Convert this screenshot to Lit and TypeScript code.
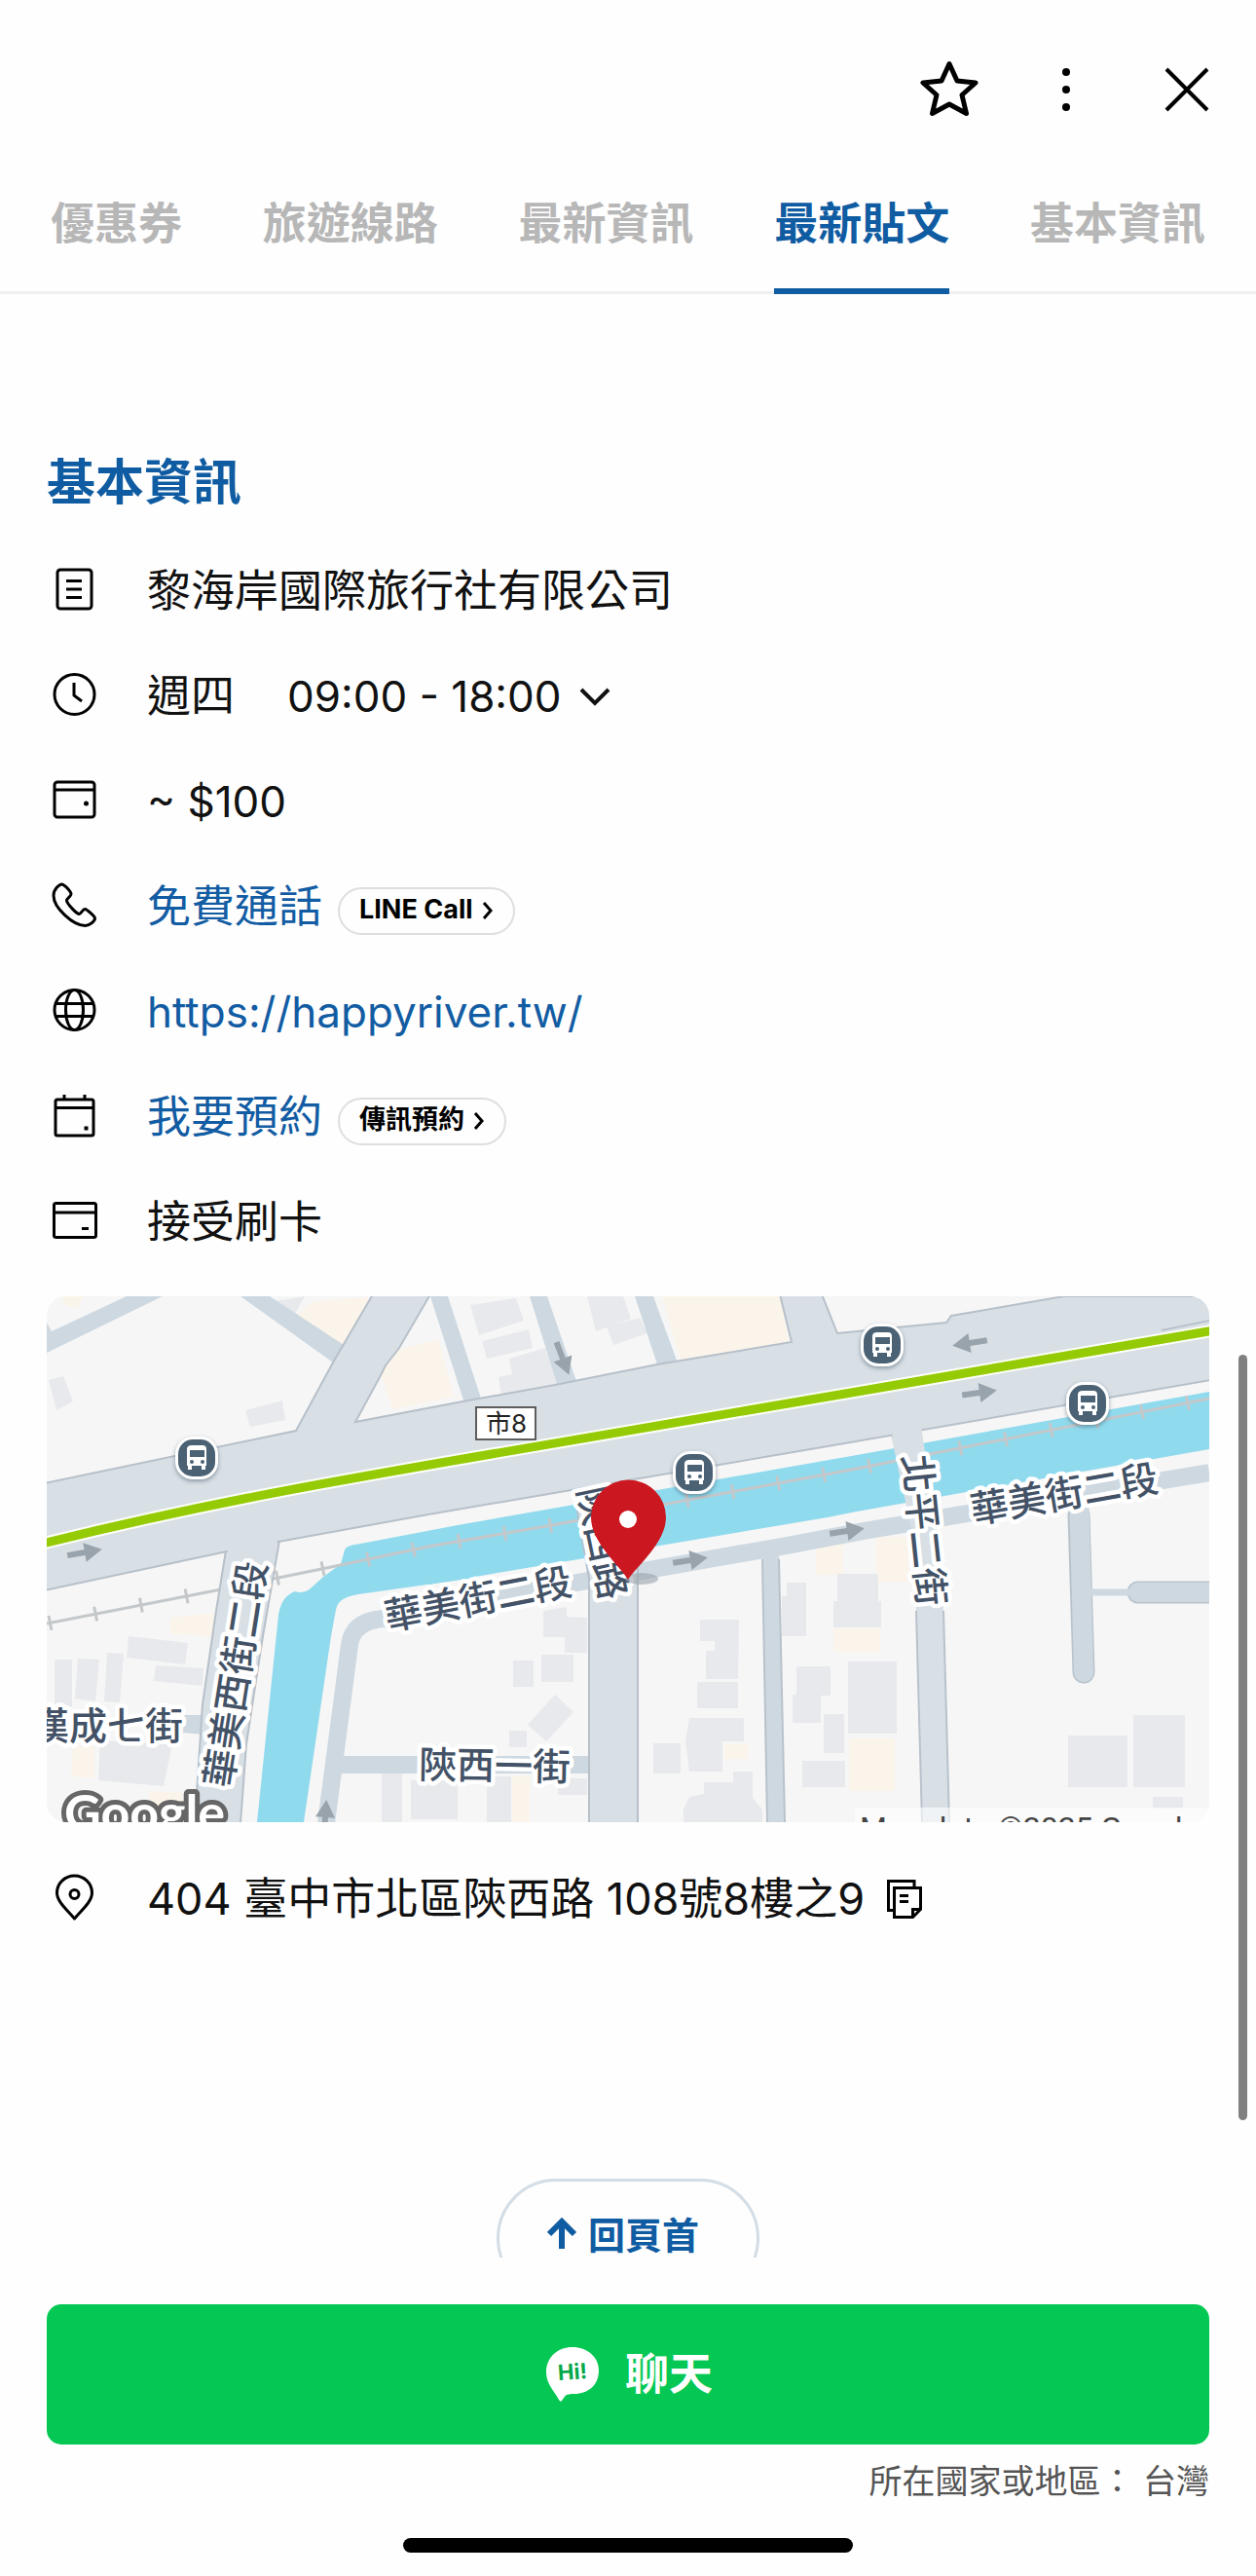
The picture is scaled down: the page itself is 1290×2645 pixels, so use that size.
import { LitElement, html, css, svg } from "lit";
import { customElement, state } from "lit/decorators.js";

const icons = {
  doc: svg`<rect x="7" y="4" width="35" height="40" rx="3"/><path d="M16 15.500h16M16 24h16M16 32.500h16"/>`,
  clock: svg`<circle cx="24.500" cy="24" r="20.500"/><path d="M24 12v13l8 6"/>`,
  wallet: svg`<rect x="4" y="6" width="41" height="36" rx="3"/><path d="M4 14h41"/><circle class="dot" cx="36.500" cy="28" r="2.500"/>`,
  phone: svg`<path d="M11.500 3C9 3 3 8 3 14.500 3 27 23 45.500 35.500 45.500c5 0 10-5 10-7.500 0-2-8-9-10-9.500-2.200-.5-4.500 5-6 5-3 0-13-11-13-14 0-2 4.500-4 4.500-6.500S14 3 11.500 3z"/>`,
  globe: svg`<circle cx="24.500" cy="24" r="20.500"/><ellipse cx="24.500" cy="24" rx="9" ry="20.500"/><path d="M6 17.500h37M6 30.500h37"/>`,
  calendar: svg`<rect x="5" y="8" width="39" height="37" rx="2"/><path d="M5 16.500h39M14 3v5M35 3v5"/><path class="dot" d="M34.500 35.500h4v4h-4z"/>`,
  card: svg`<rect x="3.500" y="6.500" width="43" height="35" rx="2"/><path d="M3.500 16h43M32 32.500h7"/>`,
  pin: svg`<path d="M24.500 46C18 38 6.500 29 6.500 19.500a18 17.500 0 0 1 36 0C42.500 29 31 38 24.500 46z"/><circle cx="24.500" cy="21" r="4.500"/>`,
};

type Box = [number, number, number, number];

const greyBoxes: Box[] = [
  [8, 373, 18, 48], [374, 497, 48, 40], [344, 490, 21, 50], [452, 493, 25, 47],
  [479, 374, 21, 27], [508, 368, 33, 28], [475, 446, 18, 17], [525, 495, 30, 17],
  [668, 396, 42, 27], [623, 459, 28, 31], [770, 380, 35, 30], [766, 409, 29, 29],
  [798, 429, 21, 40], [776, 477, 44, 27], [812, 285, 42, 28], [808, 313, 49, 27],
  [823, 375, 50, 74], [1049, 451, 61, 53], [1116, 430, 53, 74], [1136, 514, 31, 12],
];
const creamBoxes: Box[] = [
  [478, 493, 18, 47], [696, 460, 24, 15], [790, 251, 28, 35],
  [808, 341, 48, 24], [852, 247, 33, 46], [824, 454, 47, 54],
];
const greyShapes = [
  "235,5 265,0 255,18", "2,86 17,82 27,108 10,117", "204,117 242,107 245,127 209,134",
  "435,9 482,2 490,25 444,40", "447,46 495,34 499,53 452,64",
  "475,64 512,53 525,90 467,103 464,83 478,80", "555,0 592,0 600,23 564,36", "575,31 609,22 617,38 582,50",
  "84,349 145,356 142,378 82,371", "112,379 161,382 160,400 110,395",
  "32,372 54,373 50,416 29,413", "62,366 79,367 75,417 59,416", "55,456 129,460 120,503 53,497",
  "510,323 534,319 534,329 555,330 555,366 532,366 532,350 510,350", "522,409 541,427 513,457 494,440",
  "671,332 711,332 710,393 677,393 677,364 686,364 686,354 671,354",
  "660,433 716,433 716,457 694,457 694,488 660,488 656,457",
  "675,499 705,499 705,488 725,488 725,515 735,527 735,540 654,540 654,527 660,514 675,511",
  "760,294 780,294 780,349 755,349 755,308 760,308",
];
const creamShapes = [
  "15,0 38,0 32,12 20,10", "274,5 330,1 332,12 305,50 257,20", "340,61 402,44 418,103 355,116 343,80",
  "632,0 754,0 762,48 652,70", "127,330 174,325 172,349 127,347", "27,462 49,462 49,495 25,493", "105,508 140,510 138,528 105,526",
];

const arrows: [number, number, number][] = [
  [39, 263, -10], [530, 64, 69], [661, 271, -9], [822, 241, -9], [958, 99, -8], [948, 48, 171], [286, 535, -86],
];
const stops: [number, number][] = [[154, 166], [665, 181], [858, 50], [1069, 110]];
const labels: [string, number, number, number][] = [
  ["華美街二段", 1045, 203, -10], ["華美街二段", 443, 311, -11], ["漢成七街", 62, 441, 0],
  ["陝西一街", 460, 482, 1], ["華美西街二段", 194, 388, -81], ["北平二街", 901, 240, 84], ["陝西路", 571, 253, 78],
];

@customElement("place-map")
class PlaceMap extends LitElement {
  static styles = css`
    :host { display: block; border-radius: 20px; overflow: hidden; }
    .map { display: block; width: 100%; height: auto; background: #f6f6f6; font-family: Inter, "Noto Sans CJK TC", sans-serif; }
    .road { fill: #d8e0e6; stroke: #b7c0c9; stroke-width: 2; }
    .wide { fill: #d8e0e6; }
    .lane { fill: #cdd8e1; }
    .path { fill: none; stroke: #cdd8e1; stroke-width: 18; }
    .grey { fill: #e7e9ec; }
    .cream { fill: #fbf4ea; }
    .water { fill: #90daee; }
    .edge { fill: none; stroke: #b9c2cb; stroke-width: 2; }
    .rail { fill: none; stroke: #c4c8ca; stroke-width: 3; }
    .ties { fill: none; stroke: #c4c8ca; stroke-width: 15; stroke-dasharray: 3 44.600; stroke-dashoffset: -2; }
    .metro-case { fill: none; stroke: #fdfef5; stroke-width: 13; }
    .metro { fill: none; stroke: #95cb04; stroke-width: 9; }
    .culdesac-edge { fill: none; stroke: #b9c3cc; stroke-width: 23; stroke-linecap: round; }
    .culdesac { fill: none; stroke: #cdd8e1; stroke-width: 20; stroke-linecap: round; }
    .link { fill: none; stroke: #cdd8e1; stroke-width: 7; }
    .arrow { fill: #98a3ac; }
    .label { font-size: 39px; fill: #435266; stroke: #fff; stroke-width: 9px; stroke-linejoin: round; paint-order: stroke; text-anchor: middle; font-family: "Noto Sans CJK TC", sans-serif; font-weight: 500; }
    .plate { fill: #fff; stroke: #5d5d5d; stroke-width: 2; }
    .plate-text { font-size: 26px; fill: #222; text-anchor: middle; }
    .stop-halo { fill: #fff; filter: drop-shadow(0 2px 2px rgba(60, 75, 90, 0.5)); }
    .stop { fill: #4b6275; }
    .white { fill: #fff; }
    .marker { fill: #cb1720; }
    .shade { fill: #9aa4ac; opacity: 0.6; }
    .brand { font-size: 52px; fill: #fff; stroke: #666; stroke-width: 10px; stroke-linejoin: round; paint-order: stroke; font-family: Lato, sans-serif; font-weight: 700; }
    .strip { fill: #fff; opacity: 0.6; }
    .credit { font-size: 32px; fill: #444; font-family: Roboto, sans-serif; }
  `;

  render() {
    const rail = "M0 336 L179 301 L292 278 L392 257 L519 235 L832 177 L1194 105";
    const metro = "M-5 254C150 216 260 196 422 168L832 98L1199 35";
    return html`<svg class="map" viewBox="0 0 1194 540" role="img" aria-label="地圖">
      ${creamShapes.map((p) => svg`<polygon class="cream" points=${p}/>`)}
      ${greyShapes.map((p) => svg`<polygon class="grey" points=${p}/>`)}
      ${creamBoxes.map(([x, y, w, h]) => svg`<rect class="cream" x=${x} y=${y} width=${w} height=${h}/>`)}
      ${greyBoxes.map(([x, y, w, h]) => svg`<rect class="grey" x=${x} y=${y} width=${w} height=${h}/>`)}
      <polygon class="lane" points="0,27 5,36 82,0 119,0 0,58"/>
      <polygon class="lane" points="199,0 229,0 305,50 310,75 294,68"/>
      <polygon class="lane" points="394,0 412,0 447,108 429,110"/>
      <polygon class="lane" points="496,0 514,0 545,90 526,96"/>
      <polygon class="lane" points="604,0 623,0 650,74 629,76"/>
      <polygon class="lane" points="139,430 164,430 162,450 139,448"/>
      <polygon class="water" points="312,256 422,235 832,163 1194,98 1194,157 832,221 802,227 392,296"/>
      <path class="water" d="M312 256Q306 257 305 264L302 275L284 288L272 299Q265 306 255 303Q241 308 238 327L216 540H264L292 349L297 322Q299 309 320 306L440 289V236z"/>
      <path class="rail" d=${rail}/>
      <path class="ties" d=${rail}/>
      <path class="path" d="M300 481H558"/>
      <path class="path" d="M287 541L311 358Q314 334 345 331L550 293L680 270L760 256L839 241L1194 181"/>
      <polygon class="lane" points="735,262 752,262 758,540 740,540"/>
      <polygon class="wide" points="866,138 898,134 914,236 921,323 927,540 899,540 893,323 888,238"/>
      <path class="edge" d="M893 323L899 540M921 323L927 540M735 270L740 540M752 270L758 540"/>
      <polygon class="road" points="540,192 582,186 607,280 607,542 557,542 557,290"/>
      <path class="road" d="M185 255L174 323L160 419L152 541H199L205 460L222 349L240 245z"/>
      <path class="road" d="M-2 192L256 138L294 68L335 -2H394L362 53L348 71L342 83L317 129L422 109L522 91L627 70L765 47L753 -2H796L812 38L924 27L929 20L1045 0H1196V86L802 154L392 224L238 252L185 262L-2 302z"/>
      <polygon class="wide" points="187,256 237,248 236,262 184,268"/>
      <polygon class="wide" points="868,138 898,132 900,150 870,152"/>
      <path class="edge" d="M1145 35L1194 25"/>
      <path class="culdesac-edge" d="M1060 225L1065 386M1121 304H1210"/>
      <path class="link" d="M1068 304H1112"/>
      <path class="culdesac" d="M1060 200L1065 386M1121 304H1210"/>
      <path class="metro-case" d=${metro}/>
      <path class="metro" d=${metro}/>
      ${arrows.map(([x, y, a]) => svg`<path class="arrow" transform="translate(${x} ${y}) rotate(${a})" d="M-18 -3H0V-10L18 0L0 10V3H-18z"/>`)}
      ${labels.map(([t, x, y, a]) => svg`<text class="label" transform="translate(${x} ${y}) rotate(${a})" y="14">${t}</text>`)}
      <rect class="plate" x="441" y="114" width="61" height="33"/>
      <text class="plate-text" x="472" y="140">市8</text>
      ${stops.map(([x, y]) => svg`<g transform="translate(${x} ${y})">
        <rect class="stop-halo" x="-22" y="-22" width="44" height="44" rx="18"/>
        <rect class="stop" x="-19" y="-19" width="38" height="38" rx="15"/>
        <path class="white" d="M-10 -9Q-10 -13 -5 -13H6Q10 -13 10 -9V8H9V12H5V8H-5V12H-9V8H-10z"/>
        <path class="stop" d="M-7 -8H8V-1H-7z"/>
        <circle class="stop" cx="-5" cy="4" r="2"/><circle class="stop" cx="6" cy="4" r="2"/>
      </g>`)}
      <ellipse class="shade" cx="611" cy="290" rx="17" ry="6"/>
      <path class="marker" d="M597 291C589 277 559 253 559 227a38 38 0 0 1 77 0C636 253 606 277 597 291z"/>
      <circle class="white" cx="597" cy="229" r="9"/>
      <text class="brand" x="18" y="549">Google</text>
      <rect class="strip" x="830" y="525" width="364" height="15"/>
      <text class="credit" x="835" y="557">Map data ©2025 Google</text>
    </svg>`;
  }
}

@customElement("app-root")
class AppRoot extends LitElement {
  @state() active = 3;
  tabs = ["優惠券", "旅遊線路", "最新資訊", "最新貼文", "基本資訊"];

  static styles = css`
    :host { display: block; font-family: Inter, "Noto Sans CJK TC", sans-serif; color: #111; }
    .app { display: flex; flex-direction: column; height: 100vh; background: #fefefe; }
    button { font: inherit; color: inherit; background: none; border: 0; padding: 0; margin: 0; cursor: pointer; }
    a { color: #125ca3; text-decoration: none; }
    svg { display: block; flex: none; }
    .actions { display: flex; justify-content: flex-end; gap: 62px; padding: 62px 41px 0; }
    .action { width: 60px; height: 60px; }
    .line { fill: none; stroke: #000; stroke-width: 5; stroke-linejoin: round; }
    .thin { stroke-width: 4; }
    .tabs { display: flex; justify-content: space-between; padding: 74px 52px 0; border-bottom: 3px solid #efefef; }
    .tab { height: 106px; margin-bottom: -3px; padding-bottom: 32px; border-bottom: 6px solid transparent; font-size: 45px; line-height: 60px; font-weight: 700; color: #b7b7b7; white-space: nowrap; }
    .tab.on { color: #105ca2; border-color: #105ca2; }
    .body { flex: 1; min-height: 0; position: relative; overflow: hidden; }
    .content { padding: 162px 48px 60px; display: flex; flex-direction: column; }
    .title { margin: 0; font-size: 50px; line-height: 62px; font-weight: 700; color: #105ca2; }
    .rows { list-style: none; margin: 57px 0 52px; padding: 0; display: flex; flex-direction: column; gap: 60px; }
    .row { display: flex; align-items: center; height: 48px; font-size: 45px; line-height: 50px; white-space: nowrap; }
    .latin { font-size: 44px; }
    .icon { width: 48px; height: 48px; margin: 0 51px 4px 4px; fill: none; stroke: #000; stroke-width: 3; stroke-linejoin: round; }
    .dot { fill: #000; stroke: none; }
    .hours { display: flex; align-items: center; gap: 17px; margin-left: 54px; }
    .pill { display: flex; align-items: center; gap: 9px; height: 49px; box-sizing: border-box; margin: 8px 0 0 16px; padding: 0 20px; border: 2px solid #dedede; border-radius: 25px; font-size: 27px; line-height: 30px; font-weight: 700; color: #000; }
    .pill-text { margin-bottom: 3px; }
    .copy { margin-left: 21px; }
    .address { margin: 55px 0 0; }
    .top { align-self: center; display: flex; justify-content: center; gap: 12px; width: 270px; height: 122px; margin-top: 263px; padding: 31px 10px 0 0; box-sizing: border-box; border: 3px solid #d3dde6; border-radius: 61px; font-size: 38px; line-height: 48px; font-weight: 700; color: #105ca2; }
    .up { stroke: #105ca2; stroke-width: 6; fill: none; }
    .thumb { position: absolute; right: 9px; top: 54%; height: 39%; width: 9px; border-radius: 5px; background: #808080; }
    .foot { padding: 48px 48px 24px; display: flex; flex-direction: column; }
    .chat { display: flex; align-items: center; justify-content: center; gap: 24px; height: 144px; border-radius: 15px; background: #04c853; color: #fff; font-size: 45px; line-height: 60px; font-weight: 700; }
    .hi { font-size: 22px; font-weight: 700; fill: #04a848; text-anchor: middle; }
    .region { margin: 14px 0 0; font-size: 34px; line-height: 48px; text-align: right; color: #555; }
    .home { align-self: center; width: 462px; height: 15px; margin-top: 34px; border-radius: 8px; background: #000; }
  `;

  icon(shape: unknown) {
    return html`<svg class="icon" viewBox="0 0 48 48" aria-hidden="true">${shape}</svg>`;
  }

  chevron() {
    return html`<svg width="12" height="18" viewBox="0 0 12 18" fill="none" stroke="#000" stroke-width="3" aria-hidden="true"><path d="M2 1l7 8-7 8"/></svg>`;
  }

  render() {
    return html`<div class="app">
      <header>
        <div class="actions">
          <button class="action" aria-label="收藏"><svg width="60" height="60" viewBox="0 0 60 60"><path class="line" d="M30 3.500L38 21L57 23L43 35.500L47.500 54.500L30 45L12.500 54.500L17 35.500L3 23L22 21z"/></svg></button>
          <button class="action" aria-label="更多"><svg width="60" height="60" viewBox="0 0 60 60"><circle cx="28" cy="12" r="4"/><circle cx="28" cy="30" r="4"/><circle cx="28" cy="48" r="4"/></svg></button>
          <button class="action" aria-label="關閉"><svg width="60" height="60" viewBox="0 0 60 60"><path class="line thin" d="M9 9L51 51M51 9L9 51"/></svg></button>
        </div>
        <nav class="tabs">
          ${this.tabs.map((t, i) => html`<button class="tab ${i === this.active ? "on" : ""}" @click=${() => (this.active = i)}>${t}</button>`)}
        </nav>
      </header>
      <main class="body">
        <div class="content">
          <h2 class="title">基本資訊</h2>
          <ul class="rows">
            <li class="row">${this.icon(icons.doc)}<span>黎海岸國際旅行社有限公司</span></li>
            <li class="row">${this.icon(icons.clock)}<span>週四</span>
              <button class="hours latin">09:00 - 18:00<svg width="34" height="22" viewBox="0 0 34 22" fill="none" stroke="#111" stroke-width="4" aria-hidden="true"><path d="M3 4l14 14L31 4"/></svg></button></li>
            <li class="row">${this.icon(icons.wallet)}<span class="latin">~ $100</span></li>
            <li class="row">${this.icon(icons.phone)}<a href="#call">免費通話</a>
              <button class="pill"><span class="pill-text">LINE Call</span>${this.chevron()}</button></li>
            <li class="row">${this.icon(icons.globe)}<a class="latin" href="https://happyriver.tw/">https://happyriver.tw/</a></li>
            <li class="row">${this.icon(icons.calendar)}<a href="#reserve">我要預約</a>
              <button class="pill"><span class="pill-text">傳訊預約</span>${this.chevron()}</button></li>
            <li class="row">${this.icon(icons.card)}<span>接受刷卡</span></li>
          </ul>
          <place-map></place-map>
          <div class="row address">${this.icon(icons.pin)}<span>404 臺中市北區陝西路 108號8樓之9</span>
            <button class="copy" aria-label="複製"><svg width="40" height="42" viewBox="0 0 40 42" fill="none" stroke="#000" stroke-width="3"><path d="M8.500 32.500H3.500V2.500H30V9.500"/><path d="M9.500 9.500H36.500V31.500L28.500 39.500H9.500zM36.500 31.500H28.500V39.500M15 17.500H24M15 23.500H24"/></svg></button></div>
          <button class="top"><svg class="up" width="30" height="46" viewBox="0 0 30 46" aria-hidden="true"><path d="M15 38V10M2 23L15 10L28 23"/></svg>回頁首</button>
        </div>
        <div class="thumb"></div>
      </main>
      <footer class="foot">
        <button class="chat"><svg width="60" height="60" viewBox="0 0 60 60" aria-hidden="true"><path fill="#fff" d="M30 2C45 2 57 12 57 26c0 15-11 24-25 24-4 0-8 .5-9.500 2L19 57q-1.500 2-3-1C12 48 3 40 3 28 3 12 15 2 30 2z"/><text class="hi" transform="rotate(-4 30 28)" x="30" y="35">Hi!</text></svg>聊天</button>
        <p class="region">所在國家或地區： 台灣</p>
        <div class="home"></div>
      </footer>
    </div>`;
  }
}
